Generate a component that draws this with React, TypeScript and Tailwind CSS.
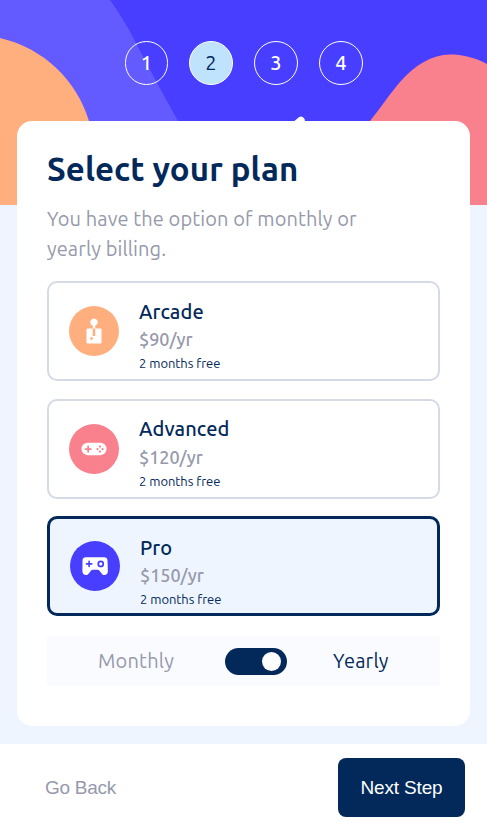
import { ReactNode } from "react";

type Plan = {
  name: string;
  price: string;
  cardClass: string;
  textClass: string;
  nameClass: string;
  icon: ReactNode;
};

function ArcadeIcon() {
  return (
    <svg className="h-[50px] w-[50px] shrink-0" viewBox="0 0 40 40">
      <circle cx="20" cy="20" r="20" fill="#ffaf7e" />
      <path
        fill="#fff"
        d="M24.995 18.005h-3.998v5.998h-2v-5.998H15a1 1 0 0 0-1 1V29a1 1 0 0 0 1 1h9.995a1 1 0 0 0 1-1v-9.995a1 1 0 0 0-1-1Zm-5.997 8.996h-2v-1.999h2v2Zm2-11.175a2.999 2.999 0 1 0-2 0v2.18h2v-2.18Z"
      />
    </svg>
  );
}

function AdvancedIcon() {
  return (
    <svg className="h-[50px] w-[50px] shrink-0" viewBox="0 0 40 40">
      <circle cx="20" cy="20" r="20" fill="#f9818e" />
      <rect x="10" y="15" width="20" height="9.9" rx="4.95" fill="#fff" />
      <path d="M13.1 20h4.400M15.300 17.800v4.400" stroke="#f9818e" strokeWidth="1.400" strokeLinecap="round" />
      <g fill="#f9818e">
        <circle cx="24.8" cy="18" r=".9" />
        <circle cx="24.8" cy="22" r=".9" />
        <circle cx="22.8" cy="20" r=".9" />
        <circle cx="26.8" cy="20" r=".9" />
      </g>
    </svg>
  );
}

function ProIcon() {
  return (
    <svg className="h-[50px] w-[50px] shrink-0" viewBox="0 0 40 40">
      <circle cx="20" cy="20" r="20" fill="#483eff" />
      <path
        fill="#fff"
        d="M12.5 13h15c1.5 0 2.4 1 2.5 2.500l.3 8.400c0 2-1.200 3.200-2.700 3.200-1 0-1.700-.4-2.300-1.200L23.400 23.600C22.900 23.100 22.600 23 22.200 23H18.100c-.5 0-.8.1-1.200.6L15 25.900c-.6.8-1.300 1.200-2.300 1.200-1.500 0-2.800-1.100-2.800-3.200l.1-8.400C10.100 14 11 13 12.500 13Z"
      />
      <path d="M13.200 18.300h4.200M15.300 16.200v4.200" stroke="#483eff" strokeWidth="1.300" strokeLinecap="round" />
      <circle cx="24.600" cy="18.300" r="2" fill="none" stroke="#483eff" strokeWidth="1.400" />
    </svg>
  );
}

const steps = [
  { n: 1, cls: "w-[43px] font-medium text-white" },
  { n: 2, cls: "w-11 bg-[#bfe2fd] text-[#02295a]" },
  { n: 3, cls: "w-11 font-medium text-white" },
  { n: 4, cls: "w-11 font-medium text-white" },
];

const plans: Plan[] = [
  {
    name: "Arcade",
    price: "$90/yr",
    cardClass: "border-2 border-[#d6d9e6] bg-white",
    textClass: "pt-[9px]",
    nameClass: "leading-[27px]",
    icon: <ArcadeIcon />,
  },
  {
    name: "Advanced",
    price: "$120/yr",
    cardClass: "mt-[18px] border-2 border-[#d6d9e6] bg-white",
    textClass: "pt-2",
    nameClass: "leading-7",
    icon: <AdvancedIcon />,
  },
  {
    name: "Pro",
    price: "$150/yr",
    cardClass: "mt-[17px] border-3 border-[#02295a] bg-[#eef5ff]",
    textClass: "pt-[11px]",
    nameClass: "leading-[27px]",
    icon: <ProIcon />,
  },
];

function PlanCard({ plan }: { plan: Plan }) {
  return (
    <button className={`flex h-[100px] w-full items-center rounded-[10px] pl-5 text-left ${plan.cardClass}`}>
      {plan.icon}
      <span className={`ml-5 flex flex-col whitespace-nowrap ${plan.textClass}`}>
        <span className={`text-[20px] font-medium tracking-[0.1px] text-[#02295a] ${plan.nameClass}`}>{plan.name}</span>
        <span className="text-[18px] leading-7 font-medium text-[#9699ab]">{plan.price}</span>
        <span className="text-[13px] leading-5 tracking-[-0.05px] text-[#02295a]">2 months free</span>
      </span>
    </button>
  );
}

export default function App() {
  return (
    <div className="relative flex h-[821px] w-[487px] flex-col overflow-hidden bg-[#eef5ff] font-['Ubuntu','Noto_Sans',sans-serif]">
      <svg className="absolute top-0 left-0 h-[205px] w-[487px]" viewBox="0 0 487 205">
        <path fill="#483eff" d="M0 0h487v205H0z" />
        <path fill="#635aff" d="M0 0h110Q123 18 135 41Q151 72 162 92L178 121L210 205H0Z" />
        <path fill="#ffaf7e" d="M0 38C44 48 77 81 89 121C97 145 99 175 96 205H0Z" />
        <path fill="#f9818e" d="M487 64C474 57 462 54.500 450 54.500C432 54.500 415 65 400 82C389 95 382 106 370 121C352 145 345 175 345 205H487Z" />
        <path d="M292 128L301 120.500" stroke="#fff" strokeWidth="7.500" strokeLinecap="round" />
      </svg>
      <header className="relative flex gap-[21px] pt-[41px] pl-[125px]">
        {steps.map((s) => (
          <div
            key={s.n}
            className={`flex h-11 items-center justify-center rounded-full border border-white pb-px text-[20px] ${s.cls}`}
          >
            {s.n}
          </div>
        ))}
      </header>
      <main className="relative mt-9 mr-[17px] ml-[17px] h-[605px] rounded-[15px] bg-white px-[30px] pt-[25px]">
        <h1 className="h-[46px] text-[33px] leading-[46px] font-bold tracking-[0.08px] whitespace-nowrap text-[#02295a]">
          Select your plan
        </h1>
        <p className="mt-3 mb-[17px] text-[20px] leading-[30px] tracking-[0.1px] whitespace-nowrap text-[#9699ab]">
          You have the option of monthly or
          <br />
          yearly billing.
        </p>
        {plans.map((plan) => (
          <PlanCard key={plan.name} plan={plan} />
        ))}
        <div className="mt-5 flex h-[50px] items-center bg-[#fafbff] text-[20px] tracking-[0.2px]">
          <span className="w-[178px] pl-[51px] text-[#9699ab]">Monthly</span>
          <span className="flex h-[27px] w-[62px] items-center justify-end rounded-full bg-[#02295a] pr-1.5">
            <span className="h-[19px] w-[19px] rounded-full bg-white" />
          </span>
          <span className="ml-[46px] text-[#02295a]">Yearly</span>
        </div>
      </main>
      <footer className="mt-[18px] flex h-[77px] items-start justify-between bg-white pt-3.5 pr-[22px] pl-[45px] font-['Liberation_Sans',Arial,sans-serif] text-[19px]">
        <button className="h-[59px] pt-0.5 tracking-[-0.25px] text-[#9699ab]">Go Back</button>
        <button className="h-[59px] w-[127px] rounded-[8px] bg-[#02295a] pt-0.5 tracking-[-0.150px] text-white">Next Step</button>
      </footer>
    </div>
  );
}
